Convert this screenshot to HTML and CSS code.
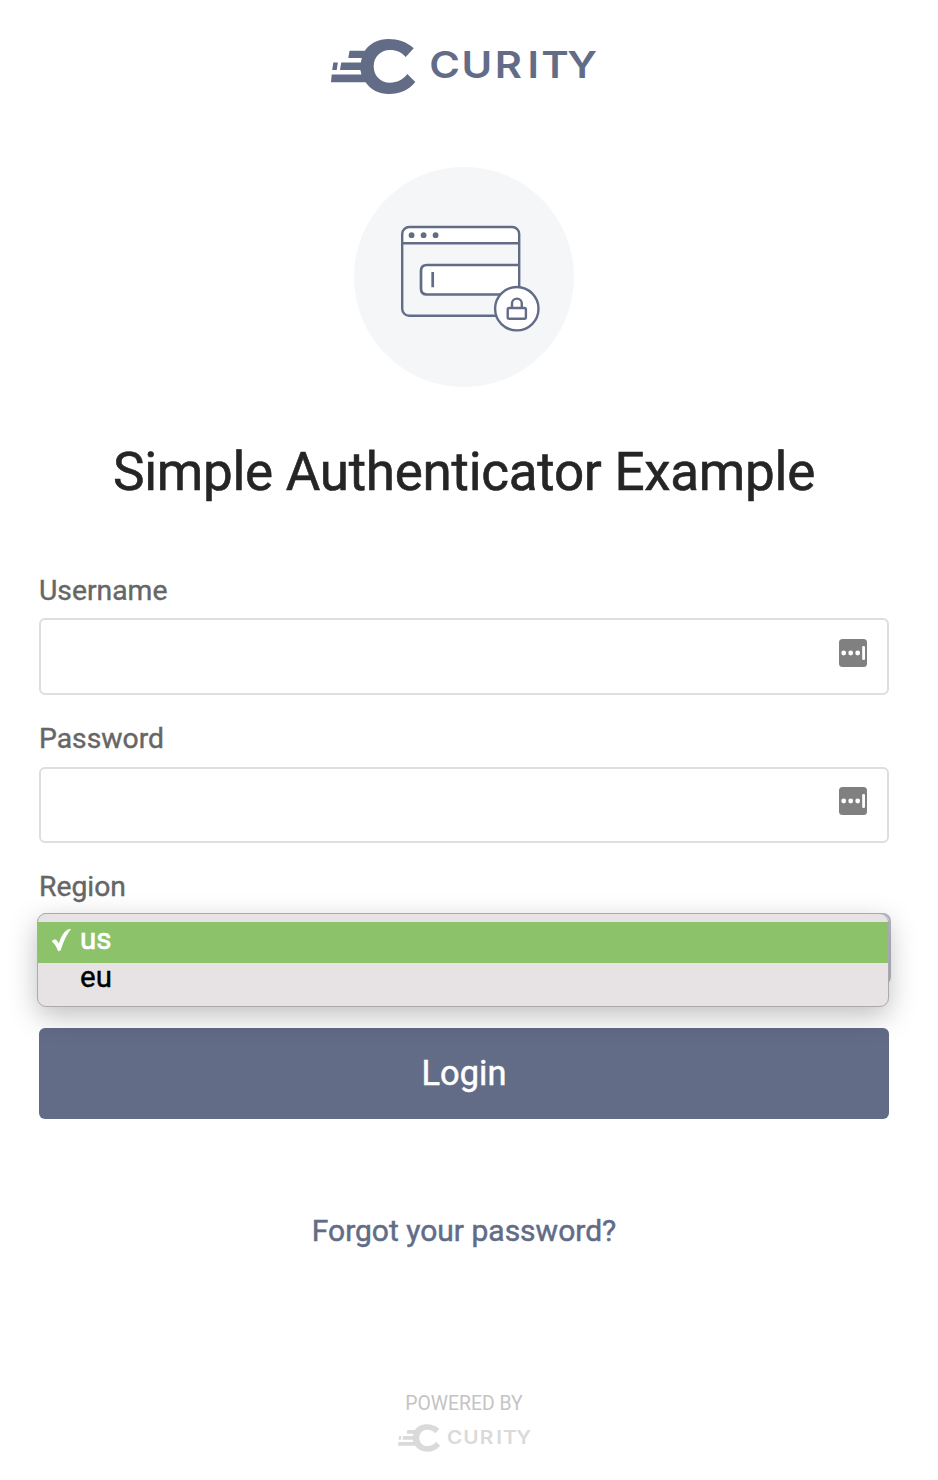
FILE: index.html
```html
<!DOCTYPE html>
<html lang="en">
<head>
<meta charset="utf-8">
<title>Simple Authenticator Example</title>
<link rel="stylesheet" href="styles.css">
</head>
<body>
<svg class="defs" width="0" height="0" aria-hidden="true">
  <symbol id="logo" viewBox="331 39 266 55" overflow="visible">
    <path fill="currentColor" d="M413.7 48.3C407 42 398 39 388.5 39C378.500 39 370 43.300 364.800 50.700H349.500L348.300 58H361.800L360.800 62.600H341.200L340 70H360.400L361.400 74.500H331.700L331 82.200H365.500C370.500 89.500 379 94 389 94C400 94 409 90 415.300 82L407.300 74C403 79.500 397 82.700 390 82.700C380.500 82.700 373.700 75.500 373.700 66.400C373.700 57 380.500 50 390 50C396.500 50 402 52.500 405.700 57ZM333.300 62.600H337.900L336.700 70H332.200Z"/>
    <text class="logo-text" transform="translate(429.200 77.600) scale(1.12 1)" x="0 28.900 58.500 87.800 100 123.300" y="0" fill="currentColor">CURITY</text>
  </symbol>
  <symbol id="manager" viewBox="0 0 28 28">
    <rect width="28" height="28" rx="3.500" fill="#808080"/>
    <g fill="#fff"><circle cx="4.700" cy="14" r="2.400"/><circle cx="11.700" cy="14" r="2.400"/><circle cx="18.700" cy="14" r="2.400"/><rect x="23.200" y="7" width="2.800" height="14" rx="1.200"/></g>
  </symbol>
</svg>
<main class="page">
  <svg class="logo"><use href="#logo"/></svg>
  <svg class="hero" viewBox="354 167 220 220">
    <circle cx="464" cy="277" r="110" fill="#f4f6f8"/>
    <path d="M402.200 243.300V234q0-7 7-7h103q7 0 7 7v9.300z" fill="#fff"/>
    <path d="M519 265H427q-6 0-6 6v17.500q0 6 6 6h92z" fill="#fff"/>
    <g fill="none" stroke="#626c87" stroke-width="2.400">
      <rect x="402.200" y="227" width="117" height="88.800" rx="7"/>
      <path d="M402 243.300h118"/>
      <path d="M519 265H427q-6 0-6 6v17.500q0 6 6 6h78M432.700 272v15.300" stroke-width="2.700"/>
      <circle cx="516.800" cy="308.700" r="21.700" fill="#fff"/>
      <rect x="507.700" y="308" width="18.200" height="10.800" rx="1.500"/>
      <path d="M512 308v-4.500a4.900 4.900 0 0 1 9.800 0v4.500"/>
    </g>
    <g fill="#626c87"><circle cx="411.600" cy="235.200" r="2.900"/><circle cx="423.600" cy="235.200" r="2.900"/><circle cx="435.600" cy="235.200" r="2.900"/></g>
  </svg>
  <h1 class="title">Simple Authenticator Example</h1>
  <form class="form">
    <div class="field">
      <label class="label">Username</label>
      <div class="input"><svg class="manager"><use href="#manager"/></svg></div>
    </div>
    <div class="field password">
      <label class="label">Password</label>
      <div class="input"><svg class="manager"><use href="#manager"/></svg></div>
    </div>
    <div class="field region">
      <label class="label">Region</label>
      <div class="select">
        <div class="menu">
          <div class="option selected"><svg class="check" viewBox="0 0 20 24"><path d="M.7 13.300Q2.500 11.200 4.300 11.200Q6.300 12.300 7.800 15.500Q11 5 16.800 1.600Q18.500 .8 20 1.200Q14 8 9.600 22.500L7.200 23.300Q4.300 16 .7 13.300Z" fill="#fff"/></svg><span>us</span></div>
          <div class="option">eu</div>
        </div>
      </div>
    </div>
    <button class="login" type="button">Login</button>
  </form>
  <a class="forgot">Forgot your password?</a>
  <footer class="footer"><span class="powered">POWERED BY</span><svg class="small-logo"><use href="#logo"/></svg></footer>
</main>
</body>
</html>
```
FILE: styles.css
```css
* { box-sizing: border-box; }
body { margin: 0; background: #fff; font-family: Roboto, "Liberation Sans", sans-serif; }
.defs { position: absolute; }
.page { display: flex; flex-direction: column; align-items: center; width: 938px; height: 1480px; padding: 39px 49px 0 39px; overflow: hidden; }
.logo { width: 266px; height: 55px; color: #626c87; flex: none; overflow: visible; }
.logo-text { font: 600 37.200px Inter, sans-serif; }
.hero { width: 220px; height: 220px; margin-top: 73px; flex: none; }
.title { margin: 53px 0 0; font-size: 53px; line-height: 64px; font-weight: 400; letter-spacing: -.27px; color: #252525; white-space: nowrap; -webkit-text-stroke: .6px; }
.form { width: 100%; margin-top: 66px; }
.field { height: 149px; }
.label { display: block; height: 48px; line-height: 41px; font-size: 28.300px; color: #666; -webkit-text-stroke: .4px; }
.input { display: flex; justify-content: flex-end; height: 77px; padding: 19px 20px; border: 2px solid #dedede; border-radius: 6px; }
.manager { width: 28px; height: 28px; }
.password { height: 148px; }
.password .label { line-height: 39px; }
.password .input { height: 76px; padding-top: 18px; }
.region { height: 161px; }
.region .label { height: 46px; line-height: 40px; }
.select { position: relative; width: 852px; height: 72px; border: 2px solid #b5bbc7; border-radius: 8px; }
.menu { position: absolute; top: -2px; left: -4px; width: 852px; height: 94px; padding-top: 8px; border: 1px solid #aaa9ad; border-radius: 9px; background: #e7e3e4; box-shadow: 0 9px 28px rgba(0,0,0,.25); }
.option { height: 41px; padding-left: 42px; font-size: 29.500px; line-height: 34px; color: #000; -webkit-text-stroke: .4px; }
.option:last-child { line-height: 29px; }
.selected { display: flex; padding-left: 13px; color: #fff; background: #8cc269; -webkit-text-stroke: .7px; }
.check { width: 20px; height: 24px; margin: 6px 9px 0 0; }
.login { display: block; width: 850px; height: 91px; border: 0; border-radius: 6px; background: #626c87; color: #fff; font: 400 34.400px/88px Roboto, sans-serif; padding: 0 0 1px; -webkit-text-stroke: .5px; }
.forgot { margin-top: 92px; font-size: 30px; line-height: 40px; color: #626c87; -webkit-text-stroke: .5px; }
.footer { display: flex; flex-direction: column; align-items: center; margin-top: 141px; }
.powered { font-size: 19.400px; line-height: 24px; color: #c4c4c4; }
.small-logo { width: 133px; height: 28px; margin-top: 8px; color: #dadada; overflow: visible; }
```
